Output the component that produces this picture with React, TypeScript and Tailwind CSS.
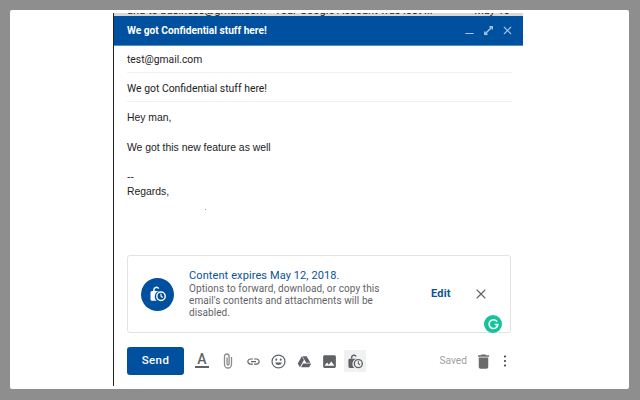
import { X, Minus } from 'lucide-react';

function TimerLock({ className }: { className?: string }) {
  return (
    <svg viewBox="0 0 24 24" className={className} fill="none">
      <path d="M6.500 8V6.500a3.400 3.400 0 0 1 6.400-1.600" stroke="currentColor" strokeWidth="2" />
      <path d="M4 8h9.500a7.500 7.500 0 0 0-3.200 13H4a2 2 0 0 1-2-2v-9a2 2 0 0 1 2-2z" fill="currentColor" />
      <circle cx="16" cy="15" r="5.600" stroke="currentColor" strokeWidth="1.900" />
      <path d="M16 11.800V15l2.400 1.600" stroke="currentColor" strokeWidth="1.500" />
    </svg>
  );
}

function ToolIcon({ children, active }: { children: React.ReactNode; active?: boolean }) {
  return (
    <div className={`w-[22px] h-[22px] flex items-center justify-center text-[#5f6368] ${active ? 'bg-[#f1f1f1]' : ''}`}>
      {children}
    </div>
  );
}

export default function App() {
  return (
    <div className="w-[640px] h-[400px] bg-[#8e8e8e] pt-[10px] px-[10px] overflow-hidden" style={{ fontFamily: 'Roboto, sans-serif' }}>
      <div className="w-[619px] h-[379px] bg-white rounded-[2px] pt-[3px] pl-[103px]">
        <div className="w-[410px] h-[373px] border-l border-[#222] flex flex-col">
          <div className="h-[3px] overflow-hidden bg-[#d8d8d8] shrink-0">
            <div className="-mt-[8px] pl-[13px] pr-[13px] flex justify-between text-[11px] leading-[11px] text-[#222] whitespace-nowrap">
              <span>and to business@gmail.com - Your Google Account was lost ...</span>
              <span>May 10</span>
            </div>
          </div>
          <div className="h-[30px] bg-[#0050a0] border-b border-[#5b8fc4] flex items-center justify-between pl-[13px] pr-[9px] shrink-0">
            <span className="text-white text-[10.2px] font-bold">We got Confidential stuff here!</span>
            <div className="flex items-center gap-[6px] text-[#a9c6e6]">
              <Minus className="w-[13px] h-[13px] translate-y-[3px]" strokeWidth={2} />
              <svg viewBox="0 0 14 14" className="w-[13px] h-[13px]" fill="none" stroke="currentColor" strokeWidth="1.5">
                <path d="M3.500 10.500l7-7" />
                <path d="M8 3h3v3M3 8v3h3" />
              </svg>
              <X className="w-[13px] h-[13px]" strokeWidth={2} />
            </div>
          </div>

          <div className="pl-[13px] pr-[11px] shrink-0">
            <div className="h-[27px] pt-[2px] border-b border-[#f2f2f2] flex items-center text-[10.3px] text-[#222]">
              test@gmail.com
            </div>
            <div className="h-[29px] pt-[3px] border-b border-[#f0f0f0] flex items-center text-[10.4px] text-[#222]">
              We got Confidential stuff here!
            </div>
          </div>

          <div className="relative pl-[13px] pt-[9px] h-[153px] text-[10.4px] leading-[14.8px] text-[#222] shrink-0" style={{ fontFamily: '"Liberation Sans", sans-serif' }}>
            <div>Hey man,</div>
            <div>&nbsp;</div>
            <div>We got this new feature as well</div>
            <div>&nbsp;</div>
            <div>--</div>
            <div>Regards,</div>
            <div className="absolute left-[91px] top-[107px] w-px h-px bg-[#999]" />
          </div>

          <div className="relative ml-[13px] w-[384px] h-[78px] border border-[#e3e3e3] rounded-[3px] flex items-center pl-[13px] shrink-0">
            <div className="w-[33px] h-[33px] rounded-full bg-[#0050a0] text-white flex items-center justify-center shrink-0">
              <TimerLock className="w-[18px] h-[18px]" />
            </div>
            <div className="ml-[15px] w-[212px]">
              <div className="text-[11px] leading-[14px] text-[#0b5394] tracking-[0.1px]">Content expires May 12, 2018.</div>
              <div className="text-[10px] leading-[12px] text-[#5f6368] tracking-[0.08px]">
                Options to forward, download, or copy this email's contents and attachments will be disabled.
              </div>
            </div>
            <span className="ml-[30px] text-[11px] font-bold text-[#0b5394] tracking-[0.2px]">Edit</span>
            <X className="ml-[22px] w-[16px] h-[16px] text-[#5f6368]" strokeWidth={1.6} />
            <div className="absolute left-[356px] top-[59px] w-[18px] h-[18px] rounded-full bg-[#15c39a] flex items-center justify-center">
              <svg viewBox="0 0 16 16" className="w-[13px] h-[13px]" fill="none" stroke="white" strokeWidth="2">
                <path d="M12.500 4.500A5.400 5.400 0 1 0 13.400 8H9.500" />
              </svg>
            </div>
          </div>

          <div className="flex items-center pl-[13px] pr-[10px] pt-[14px] shrink-0">
            <div className="w-[57px] h-[28px] rounded-[3px] bg-[#0050a0] text-white text-[11.5px] font-medium tracking-[0.4px] flex items-center justify-center">
              Send
            </div>
            <div className="ml-[7px] flex items-center gap-[3.5px]">
              <ToolIcon>
                <div className="flex flex-col items-center text-[14px] leading-[11px] font-medium">
                  A
                  <div className="w-[14px] h-[1.5px] mt-[1px] bg-[#5f6368]" />
                </div>
              </ToolIcon>
              <ToolIcon>
                <svg viewBox="0 0 10 16" className="w-[10px] h-[16px]" fill="none" stroke="#8a8a8a" strokeWidth="1.300">
                  <path d="M8.500 4v7.500a3.500 3.500 0 0 1-7 0V3.300a2.300 2.300 0 0 1 4.600 0V11a1 1 0 0 1-2 0V4.500" />
                </svg>
              </ToolIcon>
              <ToolIcon>
                <svg viewBox="0 0 24 24" className="w-[15px] h-[15px]" fill="currentColor">
                  <path d="M3.900 12c0-1.710 1.390-3.100 3.100-3.100h4V7H7c-2.760 0-5 2.240-5 5s2.240 5 5 5h4v-1.900H7c-1.710 0-3.100-1.390-3.100-3.100zM8 13h8v-2H8v2zm9-6h-4v1.900h4c1.710 0 3.100 1.390 3.100 3.100s-1.390 3.100-3.100 3.100h-4V17h4c2.760 0 5-2.240 5-5s-2.240-5-5-5z" />
                </svg>
              </ToolIcon>
              <ToolIcon>
                <svg viewBox="0 0 16 16" className="w-[15px] h-[15px]" fill="none">
                  <circle cx="8" cy="8" r="6.900" stroke="currentColor" strokeWidth="1.300" />
                  <circle cx="5.600" cy="6" r="1.100" fill="currentColor" />
                  <circle cx="10.400" cy="6" r="1.100" fill="currentColor" />
                  <path d="M4.400 9h7.200a3.700 3.700 0 0 1-7.200 0z" fill="currentColor" />
                </svg>
              </ToolIcon>
              <ToolIcon>
                <svg viewBox="0 0 24 24" className="w-[15px] h-[15px]" fill="currentColor">
                  <path d="M7.710 3.500L1.150 15l3.430 6 6.550-11.500zM9.730 15L6.300 21h13.120l3.430-6zm11.830-1L15.420 3.500H8.570L14.710 14z" />
                </svg>
              </ToolIcon>
              <ToolIcon>
                <svg viewBox="0 0 24 24" className="w-[17px] h-[17px]" fill="currentColor">
                  <path d="M21 19V5c0-1.100-.9-2-2-2H5c-1.100 0-2 .9-2 2v14c0 1.100.9 2 2 2h14c1.100 0 2-.9 2-2zM8.500 13.500l2.500 3.010L14.500 12l4.500 6H5l3.500-4.500z" />
                </svg>
              </ToolIcon>
              <ToolIcon active><TimerLock className="w-[17px] h-[17px]" /></ToolIcon>
            </div>
            <span className="ml-auto text-[10.2px] text-[#a0a0a0]">Saved</span>
            <svg viewBox="0 0 24 24" className="ml-[6.500px] w-[19px] h-[19px] text-[#6b6b6b]" fill="currentColor">
              <path d="M6 19c0 1.100.9 2 2 2h8c1.100 0 2-.9 2-2V7H6v12zM19 4h-3.500l-1-1h-5l-1 1H5v2h14V4z" />
            </svg>
            <svg viewBox="0 0 16 16" className="ml-[4.500px] w-[16px] h-[16px] text-[#444]" fill="currentColor">
              <circle cx="8" cy="3.500" r="1.100" />
              <circle cx="8" cy="8" r="1.100" />
              <circle cx="8" cy="12.500" r="1.100" />
            </svg>
          </div>
        </div>
      </div>
    </div>
  );
}
